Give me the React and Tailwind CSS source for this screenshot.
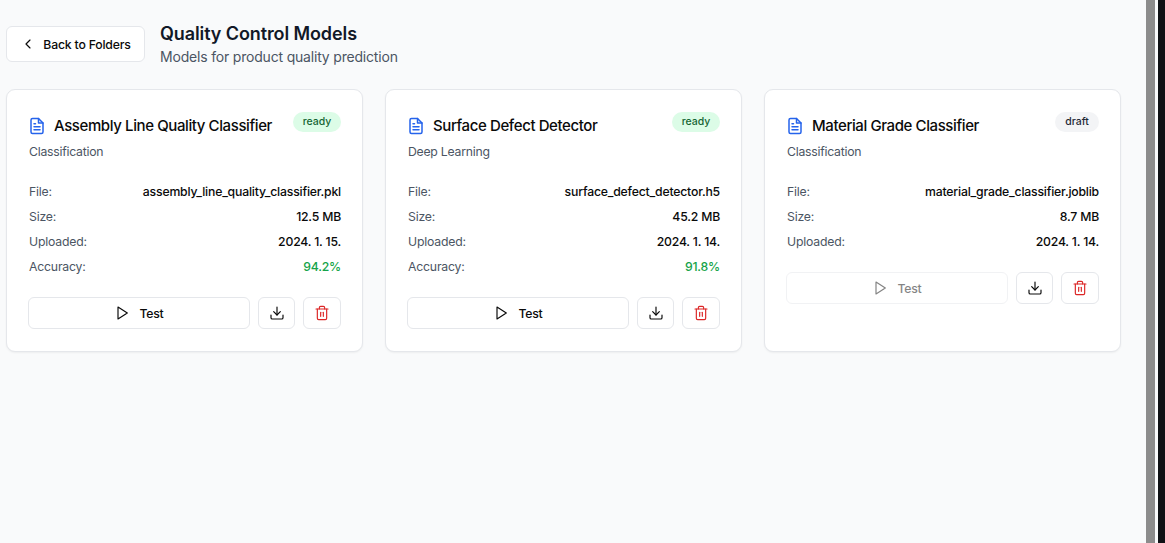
import React from "react";
import { ChevronLeft, Download, Trash2 } from "lucide-react";

const models = [
  {
    name: "Assembly Line Quality Classifier",
    type: "Classification",
    file: "assembly_line_quality_classifier.pkl",
    size: "12.5 MB",
    uploaded: "2024. 1. 15.",
    accuracy: "94.2%",
    status: "ready",
  },
  {
    name: "Surface Defect Detector",
    type: "Deep Learning",
    file: "surface_defect_detector.h5",
    size: "45.2 MB",
    uploaded: "2024. 1. 14.",
    accuracy: "91.8%",
    status: "ready",
  },
  {
    name: "Material Grade Classifier",
    type: "Classification",
    file: "material_grade_classifier.joblib",
    size: "8.7 MB",
    uploaded: "2024. 1. 14.",
    status: "draft",
  },
];

const FileIcon = () => (
  <svg width="18" height="18" viewBox="0 0 24 24" fill="none" stroke="#2563eb" strokeWidth="2" strokeLinecap="round" strokeLinejoin="round" className="shrink-0 -mt-px">
    <path d="M14 2H6a2 2 0 0 0-2 2v16a2 2 0 0 0 2 2h12a2 2 0 0 0 2-2V8z" />
    <path d="M14 2v6h6" />
    <path d="M16 13H8" />
    <path d="M16 17H8" />
    <path d="M10 9H8" />
  </svg>
);

const PlayIcon = () => (
  <svg width="16" height="16" viewBox="0 0 24 24" fill="none" stroke="currentColor" strokeWidth="1.75" strokeLinecap="round" strokeLinejoin="round">
    <polygon points="6 3 20 12 6 21 6 3" />
  </svg>
);

const Row = ({ label, value, valueClass = "text-[#0a0a0a]" }) => (
  <div className="flex justify-between items-center h-[25px] text-[12.25px] tracking-[-0.2px]">
    <span className="ml-px text-[#4b5563]">{label}</span>
    <span className={`font-medium ${valueClass}`}>{value}</span>
  </div>
);

const ModelCard = ({ model }) => {
  const isReady = model.status === "ready";
  return (
    <div className="h-[263px] bg-white border border-[#e5e7eb] rounded-[9px] shadow-xs pt-[21px] px-[21px]">
      <div className="flex justify-between items-start h-[30px]">
        <div className="flex items-center gap-[8px] mt-[3px]">
          <FileIcon />
          <h3 className="text-[15px] tracking-[-0.4px] whitespace-nowrap font-medium leading-[24px] text-[#0a0a0a]">{model.name}</h3>
        </div>
        <span
          className={`mt-px h-[20px] text-center rounded-full text-[10.5px] font-medium leading-[20px] ${
            isReady ? "w-[48px] bg-[#dcfce7] text-[#166534]" : "w-[44px] bg-[#f3f4f6] text-[#1f2937]"
          }`}
        >
          {model.status}
        </span>
      </div>
      <p className="mt-[1px] ml-px text-[12.25px] tracking-[-0.25px] leading-[20px] text-[#4b5563]">{model.type}</p>
      <div className="mt-[18px]">
        <Row label="File:" value={model.file} />
        <Row label="Size:" value={model.size} />
        <Row label="Uploaded:" value={model.uploaded} />
        {model.accuracy && <Row label="Accuracy:" value={model.accuracy} valueClass="text-[#16a34a]" />}
      </div>
      <div className="flex gap-[8px] mt-[17px]">
        <button
          className={`flex-1 h-[32px] flex items-center justify-center gap-[9px] bg-white border border-[#e5e7eb] rounded-[6px] text-[12.25px] tracking-[-0.2px] font-medium text-[#0a0a0a] ${
            isReady ? "" : "opacity-50"
          }`}
        >
          <PlayIcon />
          <span className="pt-[2px]">Test</span>
        </button>
        <button className="w-[37px] h-[32px] flex items-center justify-center bg-white border border-[#e5e7eb] rounded-[6px] text-[#0a0a0a]">
          <Download size={16} strokeWidth={1.75} />
        </button>
        <button className="w-[38px] h-[32px] flex items-center justify-center bg-white border border-[#e5e7eb] rounded-[6px] text-[#dc2626]">
          <Trash2 size={16} strokeWidth={1.75} />
        </button>
      </div>
    </div>
  );
};

const App = () => {
  return (
    <div className="h-[543px] flex overflow-hidden bg-[#f9fafb] font-['Inter',sans-serif]">
      <main className="flex-1 pl-[6px] pr-[25px] pt-[22px]">
        <div className="flex items-start gap-[15px] h-[67px]">
          <button className="mt-[4px] w-[139px] h-[36px] flex items-center justify-center gap-[7px] bg-white border border-[#e5e7eb] rounded-[6px] text-[12.25px] tracking-[-0.2px] font-medium text-[#0a0a0a]">
            <ChevronLeft size={16} strokeWidth={1.75} />
            <span className="pt-[2px]">Back to Folders</span>
          </button>
          <div>
            <h1 className="text-[18px] tracking-[-0.1px] font-semibold leading-[24px] text-[#111827]">Quality Control Models</h1>
            <p className="mt-[1px] text-[14px] tracking-[-0.19px] leading-[20px] text-[#4b5563]">Models for product quality prediction</p>
          </div>
        </div>
        <div className="grid grid-cols-3 gap-[22px]">
          {models.map((model) => (
            <ModelCard key={model.name} model={model} />
          ))}
        </div>
      </main>
      <div className="w-[9px] bg-[#8c8c8c]" />
      <div className="w-[3px] bg-[#f9fafb]" />
      <div className="w-[7px] bg-[#0f1115]" />
    </div>
  );
};

export default App;
